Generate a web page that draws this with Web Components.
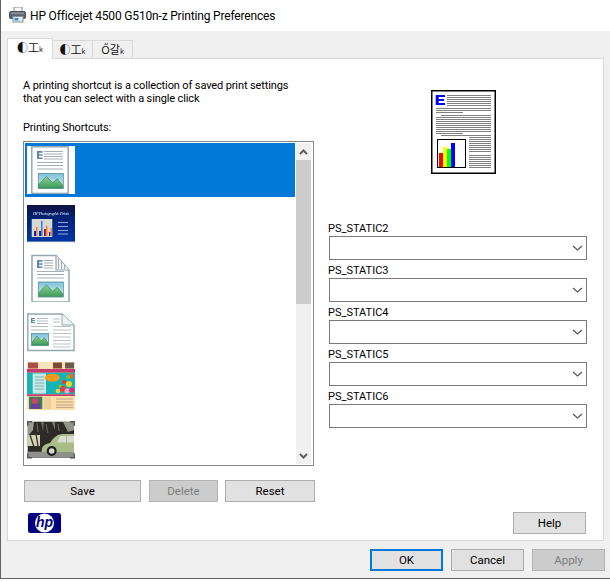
<!DOCTYPE html>
<html><head><meta charset="utf-8"><title>Printing Preferences</title>
<style>
html,body{margin:0;padding:0;background:#fff;font:11px Roboto,"Liberation Sans",sans-serif;color:#000}
</style></head><body>
<hp-window heading="HP Officejet 4500 G510n-z Printing Preferences">
  <hp-tab active>◐工<small>k</small></hp-tab>
  <hp-tab>◐工<small>k</small></hp-tab>
  <hp-tab>Ő갈<small>k</small></hp-tab>
  <hp-panel>
    <hp-column slot="left">
      <hp-desc>A printing shortcut is a collection of saved print settings<br>that you can select with a single click</hp-desc>
      <hp-caption>Printing Shortcuts:</hp-caption>
      <hp-list>
        <hp-thumb kind="doc" selected></hp-thumb>
        <hp-thumb kind="photoprint"></hp-thumb>
        <hp-thumb kind="fold"></hp-thumb>
        <hp-thumb kind="landscape"></hp-thumb>
        <hp-thumb kind="brochure"></hp-thumb>
        <hp-thumb kind="car"></hp-thumb>
      </hp-list>
      <hp-row class="actions">
        <hp-button style="width:117px;margin-left:1px">Save</hp-button>
        <hp-button disabled style="width:69px;margin-left:8px">Delete</hp-button>
        <hp-button style="width:90px;margin-left:7px">Reset</hp-button>
      </hp-row>
      <hp-logo></hp-logo>
    </hp-column>
    <hp-column slot="right">
      <hp-preview></hp-preview>
      <hp-combo label="PS_STATIC2" style="margin-top:48px"></hp-combo>
      <hp-combo label="PS_STATIC3"></hp-combo>
      <hp-combo label="PS_STATIC4"></hp-combo>
      <hp-combo label="PS_STATIC5" style="margin-bottom:1px"></hp-combo>
      <hp-combo label="PS_STATIC6"></hp-combo>
      <hp-row class="help"><hp-button style="width:73px">Help</hp-button></hp-row>
    </hp-column>
  </hp-panel>
  <hp-button slot="foot" primary style="width:73px">OK</hp-button>
  <hp-button slot="foot" style="width:73px">Cancel</hp-button>
  <hp-button slot="foot" disabled style="width:73px">Apply</hp-button>
</hp-window>
<script>
function def(name, css, html, init){
  customElements.define(name, class extends HTMLElement{
    constructor(){super();const r=this.attachShadow({mode:'open'});
      r.innerHTML='<style>'+css+'</style>'+(typeof html==='function'?html(this):html);}
    connectedCallback(){ if(init) init(this); }
  });
}
const printer=`<svg width="18" height="16" viewBox="0 0 18 16" aria-hidden="true">
<rect x="5" y="0" width="8" height="5" fill="#f4f4f4" stroke="#8a8f96"/>
<rect x="0.5" y="4.5" width="16" height="7" rx="1.5" fill="#5f6670" stroke="#4b5159"/>
<rect x="2" y="5.5" width="13" height="1.5" fill="#8d949c"/>
<rect x="4" y="9.5" width="10" height="5.5" fill="#e8edf2" stroke="#8a8f96"/>
<rect x="5.5" y="11" width="4" height="2.5" fill="#3a8fd0"/>
</svg>`;

def('hp-window',`
:host{display:flex;flex-direction:column;box-sizing:border-box;width:610px;height:579px;background:#f0f0f0;border-left:1px solid #626262;border-bottom:1px solid #626262}
.title{display:flex;align-items:center;height:31px;background:#fff;flex:none;padding-left:8px;gap:3px;font:12px Roboto,"Liberation Sans",sans-serif;letter-spacing:-.17px}
.title svg{flex:none;margin-top:-1px}
.tabs{display:flex;align-items:flex-end;height:27px;flex:none;padding-left:6px}
.foot{flex:1;display:flex;justify-content:flex-end;align-items:flex-start;padding:8px 5px 0 0;gap:8px}
`,h=>`<div class="title">${printer}<span>${h.getAttribute('heading')}</span></div>
<div class="tabs"><slot></slot></div>
<slot name="panel"></slot>
<div class="foot"><slot name="foot"></slot></div>`,
h=>{const p=h.querySelector('hp-panel'); if(p) p.setAttribute('slot','panel');});

def('hp-tab',`
:host{display:flex;align-items:center;justify-content:center;box-sizing:border-box;width:41px;height:18px;background:#f0f0f0;border:1px solid #d9d9d9;border-bottom:none;margin-left:-1px;
 font:11px/13px "Noto Sans CJK KR","Open Sans",sans-serif;white-space:nowrap;position:relative;color:#111}
:host([active]){width:46px;height:21px;background:#fff;margin-bottom:-1px;z-index:1;margin-left:0;padding-bottom:3px}
::slotted(small){font-size:7px;margin-top:4px}
`,`<slot></slot>`);

def('hp-panel',`
:host{display:grid;grid-template-columns:292px 258px;column-gap:14px;box-sizing:border-box;width:597px;height:483px;margin-left:6px;background:#fff;border:1px solid #d9d9d9;padding:0 0 0 15px}
`,`<slot name="left"></slot><slot name="right"></slot>`);

def('hp-column',`:host{display:block}`,`<slot></slot>`);
def('hp-desc',`:host{display:block;line-height:13px;margin-top:20px;white-space:nowrap;letter-spacing:-.12px}`,`<slot></slot>`);
def('hp-caption',`:host{display:block;line-height:13px;margin-top:16px;letter-spacing:-.15px}`,`<slot></slot>`);

def('hp-list',`
:host{display:grid;grid-template-columns:1fr 17px;box-sizing:border-box;width:291px;height:325px;margin-top:7px;border:1px solid #828790;padding:1px;overflow:hidden}
.rows{overflow:hidden;height:321px}
.bar{display:flex;flex-direction:column;background:#f0f0f0;height:321px;width:15px;margin-left:1px}
.cap{height:17px;flex:none;display:flex;align-items:center;justify-content:center}
.thumb{height:144px;flex:none;background:#cdcdcd}
.gap{flex:1}
`,`<div class="rows"><slot></slot></div>
<div class="bar"><div class="cap"><svg width="9" height="6" viewBox="0 0 9 6"><path d="M1 5 4.5 1.5 8 5" fill="none" stroke="#606060" stroke-width="2"/></svg></div>
<div class="thumb"></div><div class="gap"></div>
<div class="cap"><svg width="9" height="6" viewBox="0 0 9 6"><path d="M1 1 4.5 4.5 8 1" fill="none" stroke="#606060" stroke-width="2"/></svg></div></div>`);

const mountains=(x,y,w,h)=>`<rect x="${x}" y="${y}" width="${w}" height="${h}" fill="url(#sky)" stroke="#4f8f99" stroke-width=".8"/>
<path d="M${x+.5} ${y+h-.5}V${y+h*.72}L${x+w*.32} ${y+h*.2} ${x+w*.58} ${y+h*.62} ${x+w*.76} ${y+h*.35} ${x+w-.5} ${y+h*.8}V${y+h-.5}Z" fill="url(#hill)" stroke="#3c8a5c" stroke-width=".7"/>`;
const defs=`<defs><linearGradient id="sky" x1="0" y1="0" x2="0" y2="1"><stop offset="0" stop-color="#7fc0dc"/><stop offset="1" stop-color="#d8f0f4"/></linearGradient>
<linearGradient id="hill" x1="0" y1="0" x2="0" y2="1"><stop offset="0" stop-color="#8fd08a"/><stop offset="1" stop-color="#3f9c5e"/></linearGradient>
<linearGradient id="navy" x1="0" y1="0" x2="0" y2="1"><stop offset="0" stop-color="#0a1240"/><stop offset=".3" stop-color="#03206f"/><stop offset="1" stop-color="#0137a8"/></linearGradient>
<filter id="soft" x="-5%" y="-5%" width="110%" height="110%"><feGaussianBlur stdDeviation=".5"/></filter></defs>`;
const E=(x,y,w,h)=>`<path d="M${x} ${y}h${w}v${h*.22}h-${w*.62}v${h*.2}h${w*.62}v${h*.18}h-${w*.62}v${h*.2}h${w*.62}v${h*.2}h-${w}Z" fill="#5c8aa8"/>`;
const hl=(x1,x2,ys,c='#9aa7ad',sw=.9)=>ys.map(y=>`<path d="M${x1} ${y}H${x2}" stroke="${c}" stroke-width="${sw}"/>`).join('');
const art={
doc:`<rect x="4.8" y=".8" width="36.4" height="46.6" fill="#fff" stroke="#93a8ae" stroke-width="1.5"/>${E(10,5,5.6,8)}${hl(17,36,[5.5,8,10.5,13])}${hl(10,36,[16.5,19.5,23])}${mountains(11.3,27.5,25,15)}`,
photoprint:`<g filter="url(#soft)"><rect y="5" width="48" height="37" fill="url(#navy)"/><rect x="0" y="41.5" width="48" height=".8" fill="#c8cdb8"/>
<text x="24" y="14.5" text-anchor="middle" font-family="Liberation Serif,serif" font-size="4" font-style="italic" font-weight="700" fill="#b9c4e6" textLength="36">HP Photographic Prints</text>
<rect x="4.7" y="19" width="20.6" height="18" fill="#d8d8d2"/>
<rect x="7" y="31" width="2" height="5" fill="#0a2fa0"/><rect x="9" y="27" width="1.5" height="9" fill="#ff7a30"/>
<rect x="12" y="31" width="2" height="5" fill="#0a2fa0"/><rect x="14" y="21" width="1.5" height="15" fill="#2f7fe8"/>
<rect x="17" y="29" width="1.8" height="7" fill="#a01010"/><rect x="19" y="26" width="1.5" height="10" fill="#ff7a30"/>
<rect x="22" y="32" width="1.5" height="4" fill="#0a2fa0"/><rect x="23.5" y="28" width="1.3" height="8" fill="#ff7a30"/>
${hl(31,41,[22.5,26.5,30.5,34],'#8f9ed0',1.1)}</g>`,
fold:`<path d="M5 1.5H29L42 16V48H5Z" fill="#fff" stroke="#93a8ae" stroke-width="1.5"/><path d="M29 1.5V16H42" fill="#eef2f3" stroke="#93a8ae" stroke-width="1.2"/>
<path d="M31.5 4V15M34.5 7V15M37.5 10.500V15" stroke="#9aa7ad" stroke-width=".9"/>${E(10,6,5.6,8)}${hl(17,26,[6.500,9,11.500,14])}${hl(10,37,[17.500,20.500,24])}${mountains(11.3,28,25,15)}`,
landscape:`<path d="M.8 6H35L47 17V42.500H.8Z" fill="#fff" stroke="#93a8ae" stroke-width="1.4"/><path d="M35 6V17H47" fill="#eef2f3" stroke="#93a8ae" stroke-width="1"/>
${E(4,10,4,5)}${hl(10,21,[10.500,13,15.500],'#a9b5ba')}${hl(4,21,[18.500,22],'#a9b5ba')}${hl(26,33,[11,14],'#a9b5ba')}${hl(26,44,[18.500,22,25.500,29,32.500,36,39],'#b3bcc4')}${mountains(4.500,25.500,17,12)}`,
brochure:`<g filter="url(#soft)"><rect width="48" height="48" fill="#fde0a8"/>
<rect x="1" y=".5" width="10" height="6" fill="#a8504a"/><rect x="13" y=".5" width="10" height="6" fill="#f4e6c0"/><rect x="26" y=".5" width="9" height="6" fill="#7a4a38"/><rect x="38" y=".5" width="9" height="6" fill="#6a5a55"/>
<rect y="7" width="48" height="3.700" fill="#c9386a"/><rect y="10.700" width="48" height="21.600" fill="#14b4b4"/><rect y="32.300" width="48" height="1.700" fill="#c9386a"/>
<rect x="5.700" y="11.500" width="13.300" height="20" fill="#c4ebe4"/>${hl(8,17,[15,18,21,24,27],'#7fb0b0',1)}
<ellipse cx="25.300" cy="15.700" rx="7.500" ry="4" fill="#f39a1c"/>
<circle cx="36" cy="27" r="3" fill="#e63d4c"/><circle cx="42" cy="22" r="3" fill="#f7d22c"/><circle cx="44" cy="14" r="2.600" fill="#f3622c"/><circle cx="40" cy="29" r="2.600" fill="#f7a1c0"/><circle cx="31" cy="29" r="2.300" fill="#f4d23c"/><circle cx="45" cy="28" r="2.600" fill="#e32b6e"/><circle cx="37" cy="20" r="2.200" fill="#d9453c"/><circle cx="41" cy="15" r="2" fill="#7fbe3c"/><circle cx="33" cy="24" r="1.800" fill="#7fbe3c"/>
<rect x="2" y="34.700" width="13.300" height="12.300" fill="#3a7a5a"/><circle cx="8" cy="39" r="3" fill="#d8406a"/><rect x="4" y="42" width="9" height="5" fill="#6a3f9a"/>
${hl(17,24,[36,38,40,42,44,46],'#dcbc90',1)}${hl(29,46,[37,40,43,45.500],'#c4a688',1.2)}</g>`,
car:`<g filter="url(#soft)"><rect x=".7" y="5.700" width="46.300" height="36" fill="#2d2b28"/>
<path d="M1 6h6l-1 8 -5 6Z" fill="#9a9c90"/><path d="M36 6h11v8l-6 2Z" fill="#8f9488"/><path d="M14 6h3l-1 9Z" fill="#6b6b60"/><path d="M25 6h3v8Z" fill="#7a7a6c"/><path d="M19 8l2 9M10 7l1 9M31 8l1 7" stroke="#6a6a5e"/>
<rect x="1" y="19" width="12" height="11" fill="#cfd2b4"/><path d="M3 19 7 31M9 18 11 30" stroke="#3a3a34" stroke-width="1.400"/>
<rect x=".7" y="35.700" width="46.300" height="6" fill="#8f8f8e"/>
<path d="M15 36c-1-5 2-8 8-9 3-5 7-9 13-9h11v18H15Z" fill="#a9bb86"/><path d="M33 20h6v6.500h-9ZM40 20h7v6.500h-7Z" fill="#d8dcd0"/>
<circle cx="24.700" cy="35" r="5" fill="#1e1e1c"/><circle cx="24.700" cy="35" r="2.800" fill="#d6d6d2"/></g>
<path d="M.8 10V5.800H5M43 5.800H47.300V10M.8 37.500V41.800H5M47.300 37.500V41.800H43" fill="none" stroke="#555" stroke-width="1.400"/>`
};
def('hp-thumb',`
:host{display:flex;align-items:center;height:54px;padding-left:2px;box-sizing:border-box}
:host([selected]){background:#0078d7}
svg{display:block;background:#fff}
`,h=>`<svg width="48" height="48" viewBox="0 0 48 48" aria-hidden="true">${defs}${art[h.getAttribute('kind')]||''}</svg>`);

def('hp-row',`:host{display:flex}
:host(.actions){margin-top:14px}
:host(.help){justify-content:flex-end;margin-top:84px;margin-right:1px}`,`<slot></slot>`);

def('hp-button',`
:host{display:flex;align-items:center;justify-content:center;box-sizing:border-box;height:22px;flex:none;background:#e1e1e1;border:1px solid #adadad;font:11.5px/13px Roboto,"Liberation Sans",sans-serif;color:#000;padding-top:1px}
:host([primary]){border:2px solid #0078d7}
:host([disabled]){background:#cccccc;border-color:#b4b4b4;color:#7f7f7f}
`,`<slot></slot>`);

const logo=`<svg width="33" height="20" viewBox="0 0 33 20" role="img">
<rect width="33" height="20" rx="2.500" fill="#00007f"/>
<circle cx="16.500" cy="10" r="9.500" fill="#fff"/>
<text x="16.500" y="14" text-anchor="middle" font-family="Liberation Sans,sans-serif" font-style="italic" font-weight="700" font-size="14" fill="#00007f">hp</text></svg>`;
def('hp-logo',`:host{display:block;margin:11px 0 0 5px;height:20px}svg{display:block}`,logo);

function preview(){
  let s='';
  const L=(a,b,y)=>s+=`<rect x="${a}" y="${y}" width="${b-a}" height="1" fill="#808080"/>`;
  for(let i=0;i<6;i++)L(16,60,5+i*2);
  L(5,60,18);L(5,60,20);L(5,32,22);L(10,60,25);
  for(let i=0;i<8;i++)L(5,60,27+i*2);
  L(5,32,43);L(10,60,45);
  for(let i=0;i<8;i++)L(38,60,47+i*2);
  for(let i=0;i<7;i++)L(38,60,65+i*2);
  return `<svg width="65" height="84" viewBox="0 0 65 84" aria-hidden="true"><rect x=".75" y=".75" width="63.500" height="82.500" fill="#fff" stroke="#000" stroke-width="1.500"/>
  <path d="M4.700 5H14V7H7.700V9H13V11H7.700V13H14V15H4.700Z" fill="#0000ff"/>${s}
  <rect x="6.500" y="49.500" width="28" height="28" fill="#fff" stroke="#000"/>
  <rect x="8" y="63" width="4" height="14" fill="#f00"/><rect x="12" y="57" width="4" height="20" fill="#ff0"/><rect x="16" y="59" width="4" height="18" fill="#0f0"/><rect x="20" y="53" width="4" height="24" fill="#00f"/></svg>`;
}
def('hp-preview',`:host{display:block;margin:31px 0 0 102px;height:84px}svg{display:block}`,preview());

def('hp-combo',`
:host{display:block}
.l{display:block;height:14px;line-height:13px;margin-top:4px;margin-left:-1px;font-size:11px}
.b{box-sizing:border-box;height:24px;border:1px solid #7a7a7a;background:#fff;display:flex;align-items:center;justify-content:flex-end;padding-right:3px}
svg{display:block}
`,h=>`<span class="l">${h.getAttribute('label')}</span><div class="b"><svg width="11" height="6" viewBox="0 0 11 6"><path d="M1 1 5.500 5 10 1" fill="none" stroke="#555" stroke-width="1.200"/></svg></div>`);
</script>
</body></html>
